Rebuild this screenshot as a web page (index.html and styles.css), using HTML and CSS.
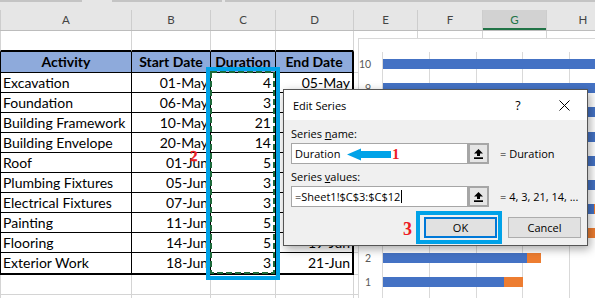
FILE: index.html
```html
<!DOCTYPE html>
<html>
<head>
<meta charset="utf-8">
<title>Edit Series</title>
<link rel="stylesheet" href="styles.css">
</head>
<body>
<div class="app">
  <div class="topbar"><i class="seg s1"></i><i class="gap g1"></i><i class="seg s2"></i><i class="gap g2"></i><i class="seg s3"></i></div>
  <div class="colheads">
    <div class="ch">A</div><div class="ch">B</div><div class="ch">C</div><div class="ch">D</div><div class="ch">E</div><div class="ch">F</div><div class="ch sel">G</div><div class="ch">H</div>
  </div>
  <div class="sheet">
    <div class="row r-top"><div class="c"></div><div class="c"></div><div class="c"></div><div class="c"></div><div class="rest"></div></div>
    <div class="row tb r-head"><div class="c h">Activity</div><div class="c h">Start Date</div><div class="c h">Duration</div><div class="c h">End Date</div><div class="rest"></div></div>
    <div class="row tb"><div class="c t">Excavation</div><div class="c n">01-May</div><div class="c n">4</div><div class="c n">05-May</div><div class="rest"></div></div>
    <div class="row tb"><div class="c t">Foundation</div><div class="c n">06-May</div><div class="c n">3</div><div class="c n"></div><div class="rest"></div></div>
    <div class="row tb"><div class="c t">Building Framework</div><div class="c n">10-May</div><div class="c n">21</div><div class="c n"></div><div class="rest"></div></div>
    <div class="row tb"><div class="c t">Building Envelope</div><div class="c n">20-May</div><div class="c n">14</div><div class="c n"></div><div class="rest"></div></div>
    <div class="row tb"><div class="c t">Roof</div><div class="c n">01-Jun</div><div class="c n">5</div><div class="c n"></div><div class="rest"></div></div>
    <div class="row tb"><div class="c t">Plumbing Fixtures</div><div class="c n">05-Jun</div><div class="c n">3</div><div class="c n"></div><div class="rest"></div></div>
    <div class="row tb"><div class="c t">Electrical Fixtures</div><div class="c n">07-Jun</div><div class="c n">3</div><div class="c n"></div><div class="rest"></div></div>
    <div class="row tb"><div class="c t">Painting</div><div class="c n">11-Jun</div><div class="c n">5</div><div class="c n"></div><div class="rest"></div></div>
    <div class="row tb"><div class="c t">Flooring</div><div class="c n">14-Jun</div><div class="c n">5</div><div class="c n">19-Jun</div><div class="rest"></div></div>
    <div class="row tb r-last"><div class="c t">Exterior Work</div><div class="c n">18-Jun</div><div class="c n">3</div><div class="c n">21-Jun</div><div class="rest"></div></div>
    <div class="row"><div class="c"></div><div class="c"></div><div class="c"></div><div class="c"></div><div class="rest"></div></div>
    <div class="row"><div class="c"></div><div class="c"></div><div class="c"></div><div class="c"></div><div class="rest"></div></div>
  </div>

  <div class="chart">
    <div class="chart-body">
      <div class="labels">
        <span>10</span><span>9</span><span>8</span><span>7</span><span>6</span><span>5</span><span>4</span><span>3</span><span>2</span><span>1</span>
      </div>
      <div class="plot">
        <div class="bar-row"><i class="bar blue" style="width:346px"></i><i class="bar orange" style="width:14px"></i></div>
        <div class="bar-row"><i class="bar blue" style="width:328px"></i><i class="bar orange" style="width:23px"></i></div>
        <div class="bar-row"><i class="bar blue" style="width:314px"></i><i class="bar orange" style="width:23px"></i></div>
        <div class="bar-row"><i class="bar blue" style="width:295px"></i><i class="bar orange" style="width:14px"></i></div>
        <div class="bar-row"><i class="bar blue" style="width:286px"></i><i class="bar orange" style="width:14px"></i></div>
        <div class="bar-row"><i class="bar blue" style="width:267px"></i><i class="bar orange" style="width:23px"></i></div>
        <div class="bar-row"><i class="bar blue" style="width:211px"></i><i class="bar orange" style="width:66px"></i></div>
        <div class="bar-row"><i class="bar blue" style="width:164px"></i><i class="bar orange" style="width:98px"></i></div>
        <div class="bar-row"><i class="bar blue" style="width:144px"></i><i class="bar orange" style="width:14px"></i></div>
        <div class="bar-row"><i class="bar blue" style="width:121px"></i><i class="bar orange" style="width:19px"></i></div>
      </div>
    </div>
  </div>

  <div class="sel-box"></div>
  <svg class="ants" width="66" height="204" viewBox="0 0 66 204"><rect x="1" y="1" width="63" height="201" fill="none" stroke="#1d6a3a" stroke-width="2" stroke-dasharray="6 3"/></svg>
  <span class="mark m2">2</span>

  <div class="dialog">
    <div class="titlebar">
      <span class="title">Edit Series</span>
      <span class="tb-btn">?</span>
      <span class="tb-btn"><svg width="11" height="11" viewBox="0 0 11 11"><path d="M0.5 0.5 L10.5 10.5 M10.5 0.5 L0.5 10.5" stroke="#000" stroke-width="1"/></svg></span>
    </div>
    <div class="dbody">
      <div class="lbl">Series <u>n</u>ame:</div>
      <div class="field-row">
        <div class="input">Duration</div>
        <div class="collapse"><svg width="9" height="10" viewBox="0 0 9 10"><path d="M4.5 0 L9 4.5 L6 4.5 L6 7 L3 7 L3 4.5 L0 4.5 Z" fill="#000"/><rect x="0" y="8.3" width="9" height="1.7" fill="#000"/></svg></div>
        <div class="result">= Duration</div>
      </div>
      <div class="lbl">Series <u>v</u>alues:</div>
      <div class="field-row">
        <div class="input">=Sheet1!$C$3:$C$12<span class="caret"></span></div>
        <div class="collapse"><svg width="9" height="10" viewBox="0 0 9 10"><path d="M4.5 0 L9 4.5 L6 4.5 L6 7 L3 7 L3 4.5 L0 4.5 Z" fill="#000"/><rect x="0" y="8.3" width="9" height="1.7" fill="#000"/></svg></div>
        <div class="result">= 4, 3, 21, 14, ...</div>
      </div>
      <div class="buttons">
        <div class="btn default">OK</div>
        <div class="btn">Cancel</div>
      </div>
    </div>
  </div>

  <div class="ok-box"></div>
  <svg class="arrow" width="44" height="13" viewBox="0 0 44 13"><path d="M0 6.5 L14 0.5 L14 3 L44 3 L44 10 L14 10 L14 12.5 Z" fill="#00a2e8"/></svg>
  <span class="mark m1">1</span>
  <span class="mark m3">3</span>
</div>
</body>
</html>
```

FILE: styles.css
```css
html, body {
  margin: 0;
  padding: 0;
  overflow: hidden;
  background: #fff;
}

.app {
  position: relative;
  width: 620px;
  height: 298px;
  overflow: hidden;
  font-family: "Lato", "Liberation Sans", sans-serif;
}

/* top strip */
.topbar {
  height: 10px;
  background: #e6e6e6;
  display: flex;
  align-items: flex-start;
}
.topbar i { display: block; height: 2px; }
.topbar .seg { background: #c4c4c4; }
.topbar .s1 { width: 82px; }
.topbar .g1 { width: 30px; }
.topbar .s2 { width: 110px; }
.topbar .g2 { width: 3px; }
.topbar .s3 { flex: 1; }

/* column headers */
.colheads {
  display: grid;
  grid-template-columns: 132px 79px 65px 78px 64px 65px 64px 1fr;
  height: 21px;
  background: #e6e6e6;
  border-bottom: 1px solid #bcbcbc;
  box-sizing: border-box;
}
.ch {
  border-right: 1px solid #cdcdcd;
  text-align: center;
  font-size: 11.5px;
  line-height: 20px;
  color: #444;
}
.ch:first-child { border-left: 1px solid #cdcdcd; }
.ch.sel {
  background: #d2d2d2;
  color: #217346;
  box-shadow: inset 0 -2px 0 #217346;
}

/* sheet */
.row {
  display: grid;
  grid-template-columns: 132px 79px 65px 78px 1fr;
  height: 20px;
  font-size: 14px;
  line-height: 19px;
  color: #000;
}
.c {
  box-sizing: border-box;
  border-right: 1px solid #d4d4d4;
  border-bottom: 1px solid #d4d4d4;
  white-space: nowrap;
  overflow: hidden;
}
.c:first-child { border-left: 1px solid #d4d4d4; }
.rest {
  box-sizing: border-box;
  border-bottom: 1px solid #d4d4d4;
  background: linear-gradient(to right,
    transparent 63px, #d4d4d4 63px 64px,
    transparent 64px 128px, #d4d4d4 128px 129px,
    transparent 129px 192px, #d4d4d4 192px 193px,
    transparent 193px);
}
.r-top { height: 21px; }
.r-top .c { border-bottom: 2px solid #000; }
.r-top .rest { border-bottom-width: 0; }

.tb .c { border-right-color: #000; border-bottom-color: #000; }
.tb .c:first-child { border-left-color: #000; }
.tb .c:nth-child(4) { border-right: 2px solid #000; }
.r-head { height: 21px; }
.r-head .h {
  background: #8eaadb;
  font-weight: 700;
  text-align: center;
  line-height: 20px;
}
.r-last { height: 22px; }
.r-last .c { border-bottom: 2px solid #000; }

.t { padding-left: 2px; }
.n { text-align: right; padding-right: 2px; }
.tb .c:nth-child(3).n { padding-right: 4px; }

/* chart */
.chart {
  position: absolute;
  left: 358px;
  top: 38px;
  width: 262px;
  height: 280px;
  background: #fff;
  border: 1px solid #d9d9d9;
}
.chart-body {
  display: flex;
  padding-top: 13px;
}
.labels {
  width: 19px;
  display: flex;
  flex-direction: column;
  text-align: right;
  font-size: 10.5px;
  color: #595959;
}
.labels span {
  height: 24.2px;
  line-height: 24.2px;
}
.plot {
  margin-left: 11px;
  flex: 1;
  padding-left: 1px;
  height: 260px;
  background: repeating-linear-gradient(to right, #d9d9d9 0 1px, transparent 1px 46.8px);
  display: flex;
  flex-direction: column;
}
.bar-row {
  height: 24.2px;
  display: flex;
  align-items: center;
}
.bar { display: block; flex: none; height: 10px; }
.blue { background: #4472c4; }
.orange { background: #ed7d31; }

/* annotations */
.sel-box {
  position: absolute;
  left: 206px;
  top: 67px;
  width: 74px;
  height: 213px;
  box-sizing: border-box;
  border: 4px solid #00a2e8;
}
.ants {
  position: absolute;
  left: 210px;
  top: 71px;
}
.mark {
  position: absolute;
  z-index: 2;
  font-family: "Liberation Serif", serif;
  font-weight: 700;
  color: #ed1c24;
  line-height: 1;
}
.m2 {
  left: 190px;
  top: 149px;
  font-size: 15px;
  -webkit-text-stroke: 0.4px #ed1c24;
}
.m1 { left: 392px; top: 147px; font-size: 15px; }
.m3 { left: 403px; top: 220px; font-size: 18px; }
.ok-box {
  position: absolute;
  left: 416px;
  top: 211px;
  width: 86px;
  height: 33px;
  box-sizing: border-box;
  border: 4px solid #00a2e8;
}
.arrow {
  position: absolute;
  left: 347px;
  top: 148px;
}

/* dialog */
.dialog {
  position: absolute;
  left: 283px;
  top: 89px;
  width: 305px;
  height: 157px;
  box-sizing: border-box;
  border: 1px solid #555;
  background: #f0f0f0;
  box-shadow: 2px 3px 9px rgba(0, 0, 0, 0.35);
  font-family: "Open Sans", "Noto Sans", sans-serif;
  font-size: 11px;
  color: #000;
}
.titlebar {
  height: 30px;
  background: #fff;
  display: flex;
  align-items: center;
  padding-left: 9px;
}
.title { flex: 1; font-size: 11px; }
.tb-btn {
  width: 46px;
  height: 30px;
  display: flex;
  align-items: center;
  justify-content: center;
  font-size: 12.5px;
}
.dbody {
  padding: 7px 6px 0 7px;
}
.lbl {
  height: 14px;
  line-height: 14px;
}
.lbl u { text-underline-offset: 1px; }
.field-row {
  display: flex;
  align-items: center;
  margin-top: 2px;
  margin-bottom: 6px;
  height: 21px;
}
.input {
  width: 177px;
  height: 21px;
  box-sizing: border-box;
  border: 1px solid #a6a6a6;
  background: #fff;
  padding-left: 3px;
  line-height: 19px;
  display: flex;
  align-items: center;
}
.caret {
  display: inline-block;
  width: 1px;
  height: 13px;
  background: #000;
  margin-left: 1px;
}
.collapse {
  width: 21px;
  height: 21px;
  box-sizing: border-box;
  border: 2px solid #a6a6a6;
  background: #e5e5e5;
  display: flex;
  align-items: center;
  justify-content: center;
}
.result { margin-left: 11px; }
.buttons {
  display: flex;
  justify-content: flex-end;
  gap: 11px;
  margin-top: 10px;
}
.btn {
  width: 73px;
  height: 21px;
  box-sizing: border-box;
  border: 1px solid #adadad;
  background: #e1e1e1;
  text-align: center;
  line-height: 19px;
}
.btn.default {
  border: 2px solid #0078d7;
  line-height: 17px;
}
```
